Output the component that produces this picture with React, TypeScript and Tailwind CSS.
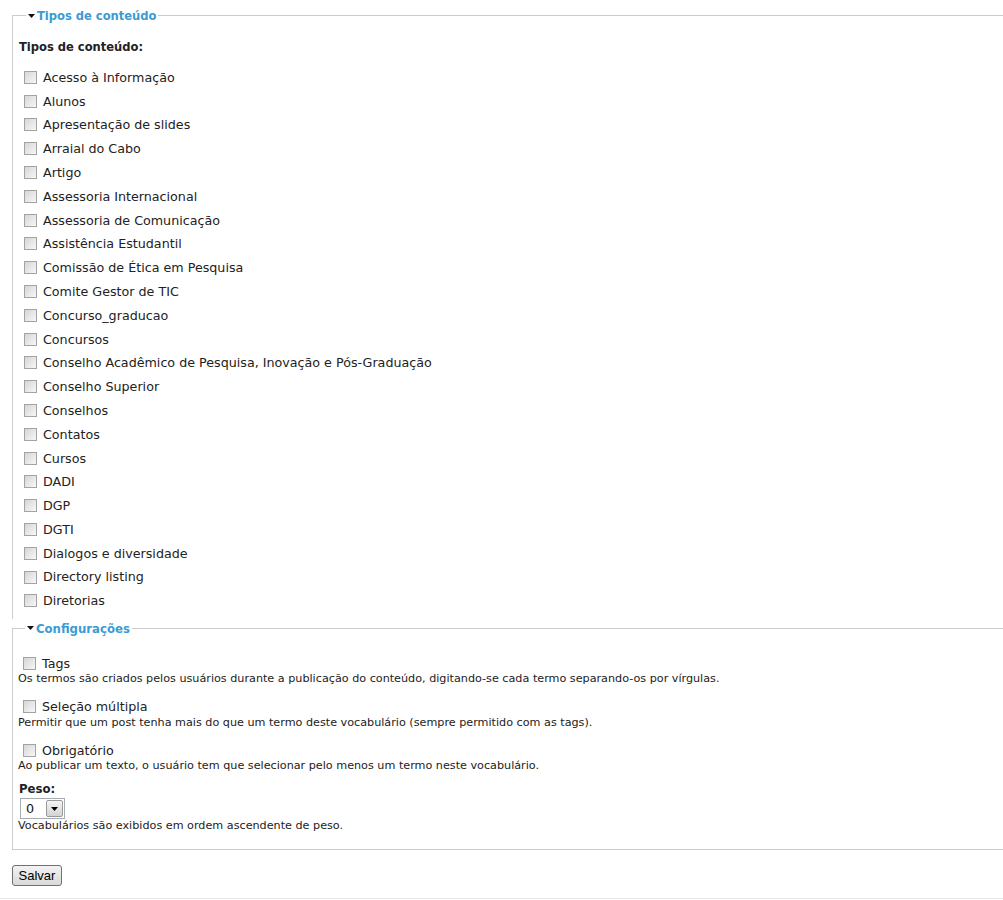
const tipos = [
  "Acesso à Informação",
  "Alunos",
  "Apresentação de slides",
  "Arraial do Cabo",
  "Artigo",
  "Assessoria Internacional",
  "Assessoria de Comunicação",
  "Assistência Estudantil",
  "Comissão de Ética em Pesquisa",
  "Comite Gestor de TIC",
  "Concurso_graducao",
  "Concursos",
  "Conselho Acadêmico de Pesquisa, Inovação e Pós-Graduação",
  "Conselho Superior",
  "Conselhos",
  "Contatos",
  "Cursos",
  "DADI",
  "DGP",
  "DGTI",
  "Dialogos e diversidade",
  "Directory listing",
  "Diretorias",
];

const configs = [
  [
    "Tags",
    "Os termos são criados pelos usuários durante a publicação do conteúdo, digitando-se cada termo separando-os por vírgulas.",
  ],
  [
    "Seleção múltipla",
    "Permitir que um post tenha mais do que um termo deste vocabulário (sempre permitido com as tags).",
  ],
  [
    "Obrigatório",
    "Ao publicar um texto, o usuário tem que selecionar pelo menos um termo neste vocabulário.",
  ],
];

function Box() {
  return (
    <span className="inline-block h-[13px] w-[13px] shrink-0 border border-[#a3a3a3] bg-linear-to-br from-[#d6d6d6] to-[#f7f7f7]" />
  );
}

function Caret() {
  return (
    <svg width="7" height="4" viewBox="0 0 7 4" className="mr-[2px]">
      <path d="M0 0h7L3.5 4z" fill="#111" />
    </svg>
  );
}

// bold text in the reference is narrower than DejaVu Sans Bold
const bold = "font-['DejaVu_Sans_Condensed','DejaVu_Sans',Verdana,sans-serif] font-bold";

export default function App() {
  return (
    <div className="relative h-[900px] bg-white pt-[6px] font-['DejaVu_Sans',Verdana,sans-serif] text-[12.7px] text-[#222]">
      <fieldset className="ml-3 border-t border-l border-[#ccc] pb-[6px] pl-[6px]">
        <legend className="ml-[7px] px-[2px]">
          <span className={`flex items-center text-[12.8px] text-[#3a9bd5] ${bold}`}>
            <Caret />
            Tipos de conteúdo
          </span>
        </legend>
        <p className={`mt-[12px] mb-[9px] text-[12.8px] ${bold}`}>Tipos de conteúdo:</p>
        <div className="flex flex-col">
          {tipos.map((t) => (
            <label key={t} className="flex h-[23.8px] items-center gap-[6px] pl-[5px]">
              <Box />
              {t}
            </label>
          ))}
        </div>
      </fieldset>

      <fieldset className="ml-3 border-t border-l border-b border-[#ccc] pb-[16px] pl-[5px]">
        <legend className="ml-[7px] px-[2px]">
          <span className={`flex items-center text-[13px] text-[#3a9bd5] ${bold}`}>
            <Caret />
            Configurações
          </span>
        </legend>
        <div className="mt-[17px] flex flex-col">
          {configs.map(([label, desc]) => (
            <div key={label} className="mb-[12.5px]">
              <label className="flex h-[16px] items-center gap-[6px] pl-[5px]">
                <Box />
                {label}
              </label>
              <p className="mt-[1px] text-[11.2px] leading-[14px]">{desc}</p>
            </div>
          ))}
          <p className={`-mt-[4.5px] pl-px text-[13px] leading-[16px] ${bold}`}>Peso:</p>
          <div className="mt-[1px] ml-[2px] flex h-[21px] w-[45px] items-center border border-[#a5acb2] bg-white pl-[5px] pr-[1px]">
            <span className="flex-1 text-[#111]">0</span>
            <span className="flex h-[17px] w-[17px] items-center justify-center rounded-[2px] border border-[#9a9a9a] bg-linear-to-b from-[#f4f4f4] to-[#d4d4d4]">
              <svg width="7" height="4" viewBox="0 0 7 4">
                <path d="M0 0h7L3.5 4z" fill="#000" />
              </svg>
            </span>
          </div>
          <p className="text-[11.2px] leading-[14px]">
            Vocabulários são exibidos em ordem ascendente de peso.
          </p>
        </div>
      </fieldset>

      <div className="mt-[15px] ml-3">
        <button
          type="button"
          className="h-[21px] w-[50px] rounded-[3px] border border-[#707070] bg-linear-to-b from-[#f3f3f3] to-[#d9d9d9] font-['Liberation_Sans',Arial,sans-serif] text-[13px] text-black"
        >
          Salvar
        </button>
      </div>

      <div className="absolute right-0 bottom-[1px] left-0 border-t border-[#e6e6e6]" />
    </div>
  );
}
